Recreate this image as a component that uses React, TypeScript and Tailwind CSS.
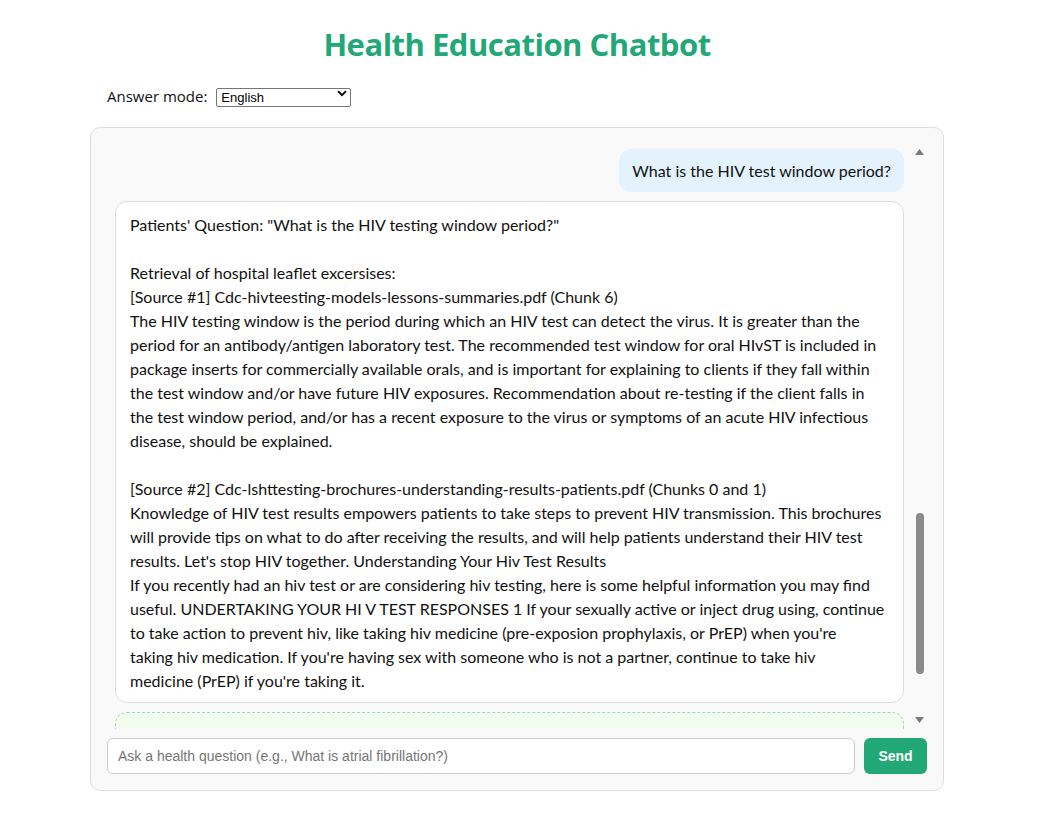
import React, { useState } from 'react';

const answerText = `Patients' Question: "What is the HIV testing window period?"

Retrieval of hospital leaflet excersises:
[Source #1] Cdc-hivteesting-models-lessons-summaries.pdf (Chunk 6)
The HIV testing window is the period during which an HIV test can detect the virus. It is greater than the
period for an antibody/antigen laboratory test. The recommended test window for oral HIvST is included in
package inserts for commercially available orals, and is important for explaining to clients if they fall within
the test window and/or have future HIV exposures. Recommendation about re-testing if the client falls in
the test window period, and/or has a recent exposure to the virus or symptoms of an acute HIV infectious
disease, should be explained.

[Source #2] Cdc-lshttesting-brochures-understanding-results-patients.pdf (Chunks 0 and 1)
Knowledge of HIV test results empowers patients to take steps to prevent HIV transmission. This brochures
will provide tips on what to do after receiving the results, and will help patients understand their HIV test
results. Let's stop HIV together. Understanding Your Hiv Test Results
If you recently had an hiv test or are considering hiv testing, here is some helpful information you may find
useful. UNDERTAKING YOUR HI V TEST RESPONSES 1 If your sexually active or inject drug using, continue
to take action to prevent hiv, like taking hiv medicine (pre-exposion prophylaxis, or PrEP) when you're
taking hiv medication. If you're having sex with someone who is not a partner, continue to take hiv
medicine (PrEP) if you're taking it.`;

const Scrollbar: React.FC = () => (
  <div className="w-[15px] flex flex-col items-center shrink-0">
    <svg width="9" height="6" viewBox="0 0 9 6" className="mt-[6px]">
      <path d="M0 6 L4.5 0 L9 6 Z" fill="#7a7a7a" />
    </svg>
    <div className="flex-1 w-full flex flex-col items-center pt-[358px]">
      <div className="w-[8px] h-[161px] rounded-full bg-[#8a8a8a]" />
    </div>
    <svg width="9" height="6" viewBox="0 0 9 6" className="mb-[6px]">
      <path d="M0 0 L9 0 L4.5 6 Z" fill="#7a7a7a" />
    </svg>
  </div>
);

const App: React.FC = () => {
  const [mode, setMode] = useState('English');
  const [question, setQuestion] = useState('');

  return (
    <div className="min-h-screen bg-white font-['Lato','Liberation_Sans',sans-serif] text-[#111]">
      <div className="w-[854px] ml-[90px] pt-[22px]">
        <h1 className="text-center text-[31px] leading-[44px] font-bold text-[#22a877] font-['Open_Sans',sans-serif] tracking-[-0.5px]">
          Health Education Chatbot
        </h1>

        <div className="flex items-center pl-[17px] mt-[19px] h-[22px]">
          <span className="text-[15px] font-['Open_Sans',sans-serif] mr-[9px]">Answer mode:</span>
          <div className="relative">
            <select
              value={mode}
              onChange={(e) => setMode(e.target.value)}
              className="appearance-none w-[135px] h-[19px] border border-[#767676] rounded-[2px] bg-white pl-[4px] text-[13px] leading-[17px] font-['Liberation_Sans',Arial,sans-serif] text-black"
            >
              <option>English</option>
              <option>Simplified</option>
            </select>
            <svg
              width="10"
              height="7"
              viewBox="0 0 10 7"
              className="absolute right-[4px] top-[6px] pointer-events-none"
            >
              <path d="M1 1.2 L5 5.2 L9 1.2" stroke="#000" strokeWidth="1.8" fill="none" />
            </svg>
          </div>
        </div>

        <div className="mt-[20px] h-[664px] border border-[#dedede] rounded-[10px] bg-[#f9f9f9] px-[16px] pt-[15px] pb-[16px] flex flex-col">
          <div className="flex flex-1 min-h-0 gap-[8px]">
            <div className="flex-1 min-w-0 overflow-hidden pl-[8px] pt-[6px] flex flex-col gap-[9px]">
              <div className="self-end bg-[#e3f2fd] rounded-[12px] px-[13px] py-[10px] text-[16px] leading-[23px]">
                What is the HIV test window period?
              </div>
              <div className="bg-white border border-[#dcdcdc] rounded-[12px] px-[14px] pt-[11px] pb-[9px] text-[16px] leading-[24px] whitespace-pre-line shrink-0">
                {answerText}
              </div>
              <div className="bg-[#f1fdef] border border-dashed border-[#a8d8a8] rounded-[12px] h-[60px] shrink-0" />
            </div>
            <Scrollbar />
          </div>

          <div className="flex gap-[9px] mt-[9px]">
            <input
              value={question}
              onChange={(e) => setQuestion(e.target.value)}
              placeholder="Ask a health question (e.g., What is atrial fibrillation?)"
              className="flex-1 h-[36px] border border-[#cccccc] rounded-[6px] bg-white px-[10px] text-[14px] font-['Liberation_Sans',Arial,sans-serif] placeholder:text-[#767676] outline-none"
            />
            <button className="w-[63px] h-[36px] rounded-[6px] bg-[#22a877] text-white text-[14px] font-bold font-['Liberation_Sans',Arial,sans-serif]">
              Send
            </button>
          </div>
        </div>
      </div>
    </div>
  );
};

export default App;
